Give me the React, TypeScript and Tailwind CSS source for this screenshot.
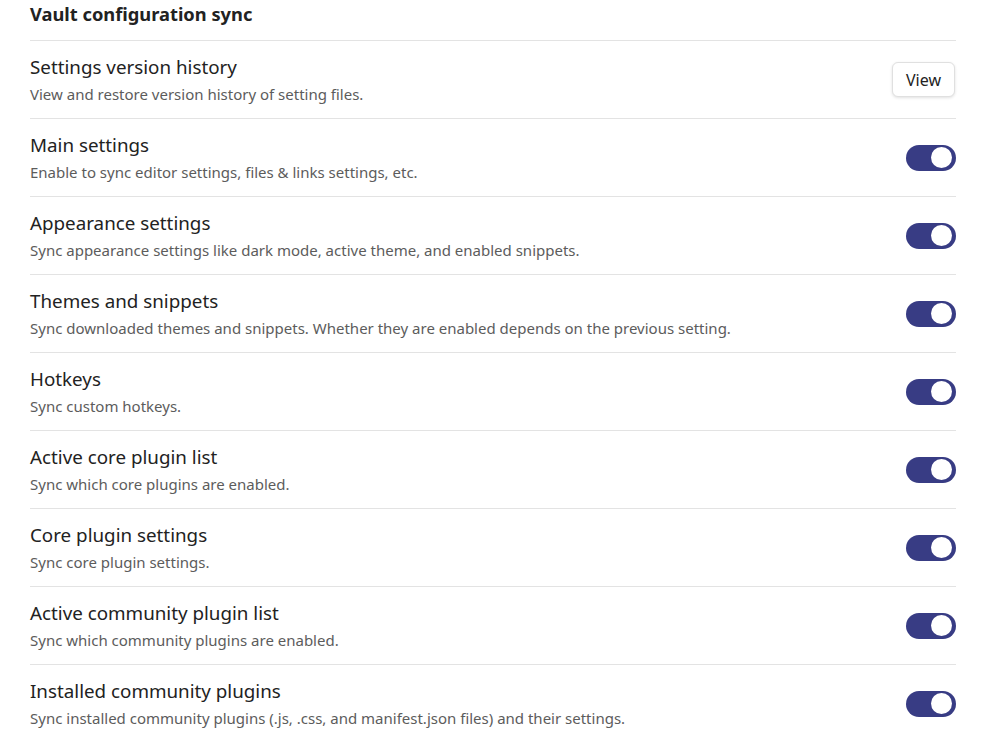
const rows = [
  { title: 'Main settings', desc: 'Enable to sync editor settings, files & links settings, etc.' },
  { title: 'Appearance settings', desc: 'Sync appearance settings like dark mode, active theme, and enabled snippets.' },
  { title: 'Themes and snippets', desc: 'Sync downloaded themes and snippets. Whether they are enabled depends on the previous setting.' },
  { title: 'Hotkeys', desc: 'Sync custom hotkeys.' },
  { title: 'Active core plugin list', desc: 'Sync which core plugins are enabled.' },
  { title: 'Core plugin settings', desc: 'Sync core plugin settings.' },
  { title: 'Active community plugin list', desc: 'Sync which community plugins are enabled.' },
  { title: 'Installed community plugins', desc: 'Sync installed community plugins (.js, .css, and manifest.json files) and their settings.' },
]

function Toggle() {
  return (
    <div className="w-[50px] h-[26px] rounded-full bg-[#383c84] flex items-center justify-end pr-[4px]">
      <div className="w-[21px] h-[21px] rounded-full bg-white" />
    </div>
  )
}

function Row({ title, desc, children }: { title: string; desc: string; children: React.ReactNode }) {
  return (
    <div className="flex items-center justify-between border-t border-[#e3e3e3] pt-[14px] pb-[14px]">
      <div>
        <div className="text-[18.8px] leading-6 text-[#222222]">{title}</div>
        <div className="mt-[5px] text-[15px] leading-5 text-[#5c5c5c]">{desc}</div>
      </div>
      {children}
    </div>
  )
}

export default function App() {
  return (
    <div
      className="w-[992px] h-[747px] overflow-hidden bg-white"
      style={{ fontFamily: '"Noto Sans", "Open Sans", sans-serif' }}
    >
      <div className="ml-[30px] w-[926px]">
        <div className="pt-[2px] pb-[14px] text-[18.3px] leading-6 font-bold text-[#222222]">
          Vault configuration sync
        </div>
        <Row title="Settings version history" desc="View and restore version history of setting files.">
          <button className="h-[35px] px-[13px] mr-px rounded-md border border-[#e0e0e0] bg-white text-[16px] text-[#222222] shadow-[0_1px_3px_rgba(0,0,0,0.12)]">
            View
          </button>
        </Row>
        {rows.map((r) => (
          <Row key={r.title} title={r.title} desc={r.desc}>
            <Toggle />
          </Row>
        ))}
      </div>
    </div>
  )
}
